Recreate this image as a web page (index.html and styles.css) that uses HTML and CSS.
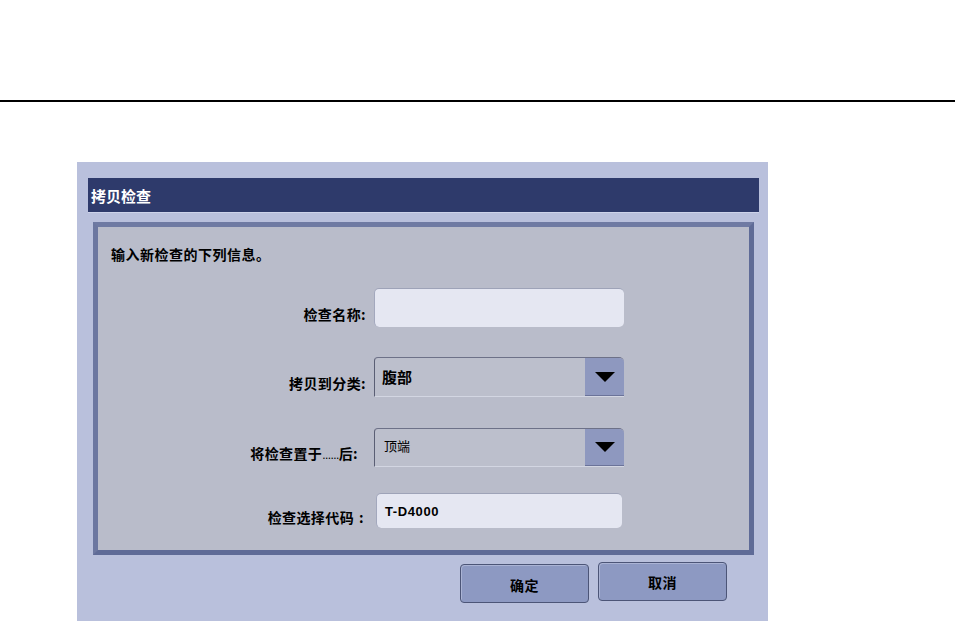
FILE: index.html
```html
<!DOCTYPE html>
<html lang="zh-CN">
<head>
<meta charset="utf-8">
<title>拷贝检查</title>
<link rel="stylesheet" href="styles.css">
</head>
<body>
<div class="top"></div>
<div class="rule"></div>
<div class="stage">
  <div class="dialog">
    <div class="titlebar">拷贝检查</div>
    <div class="panel">
      <div class="intro">输入新检查的下列信息。</div>
      <div class="form">
        <div class="label">检查名称:</div>
        <div class="input input-name"></div>

        <div class="label">拷贝到分类:</div>
        <div class="select select-cat">
          <div class="select-value bold">腹部</div>
          <div class="select-btn"><span class="tri"></span></div>
        </div>

        <div class="label label-after">将检查置于<span class="dots">......</span>后:</div>
        <div class="select select-pos">
          <div class="select-value thin">顶端</div>
          <div class="select-btn"><span class="tri"></span></div>
        </div>

        <div class="label label-code">检查选择代码<span class="colon">:</span></div>
        <div class="input input-code"><span class="code">T-D4000</span></div>
      </div>
    </div>
    <div class="actions">
      <div class="btn btn-ok">确定</div>
      <div class="btn btn-cancel">取消</div>
    </div>
  </div>
</div>
</body>
</html>
```
FILE: styles.css
```css
html, body {
  margin: 0;
  padding: 0;
  background: #ffffff;
  font-family: "Noto Sans CJK SC", "Liberation Sans", sans-serif;
  color: #000;
}

.top {
  height: 100px;
}

.rule {
  height: 2px;
  background: #000;
}

.stage {
  padding: 60px 0 0 77px;
}

.dialog {
  width: 691px;
  height: 459px;
  box-sizing: border-box;
  background: #b9c0dc;
  padding: 16px 9px 0 11px;
  display: flex;
  flex-direction: column;
}

.titlebar {
  height: 34px;
  background: #2e3a6b;
  color: #ffffff;
  font-weight: 700;
  font-size: 15px;
  padding-left: 3px;
  display: flex;
  align-items: center;
  box-shadow: 0 1px 0 #cdd3ea;
}

.panel {
  margin: 10px 0 0 5px;
  width: 661px;
  height: 333px;
  box-sizing: border-box;
  background: #b9bcca;
  border: 5px solid;
  border-color: #6f7aa3 #5f6b97 #5f6b97 #6c77a0;
}

.intro {
  padding: 17px 0 0 13px;
  font-size: 14px;
  font-weight: 700;
  line-height: 20px;
  letter-spacing: 0.5px;
}

.form {
  margin-top: 24px;
  display: grid;
  grid-template-columns: 268px 250px;
  column-gap: 8px;
  row-gap: 30px;
}

.label {
  align-self: center;
  text-align: right;
  font-size: 14px;
  font-weight: 700;
  line-height: 16px;
  padding-top: 12px;
  letter-spacing: 0.4px;
}

.label-after {
  padding-right: 8px;
  margin-top: 1px;
}

.dots {
  font-family: "Liberation Sans", sans-serif;
  font-weight: 400;
  font-size: 12px;
  letter-spacing: -0.6px;
}

.label-code {
  margin-top: -4px;
  padding-right: 2px;
}

.colon {
  margin-left: 5px;
}

.input {
  box-sizing: border-box;
  background: #e5e7f2;
  border-radius: 5px;
  border-top: 1px solid #9ea3b8;
  border-left: 1px solid #a3a8bd;
  display: flex;
  align-items: center;
}

.input-name {
  height: 39px;
}

.input-code {
  height: 35px;
  margin: -4px 2px 0 2px;
  padding-left: 8px;
}

.code {
  font-family: "Liberation Sans", sans-serif;
  font-weight: 700;
  font-size: 13px;
  letter-spacing: 0.6px;
}

.select {
  box-sizing: border-box;
  display: flex;
  background: #bcbfcc;
  border-top: 1px solid #6d7188;
  border-left: 1px solid #5a5e74;
  border-bottom: 1px solid #d3d6e2;
  border-radius: 4px 5px 0 0;
  overflow: hidden;
}

.select-cat {
  height: 40px;
}

.select-pos {
  height: 39px;
  margin-top: 1px;
}

.select-value {
  flex: 1;
  display: flex;
  align-items: center;
  padding-left: 7px;
  font-size: 15px;
}

.select-value.bold {
  font-weight: 700;
  padding-bottom: 2px;
}

.select-value.thin {
  font-weight: 400;
  font-size: 13px;
  color: #000;
  padding-left: 9px;
  padding-bottom: 4px;
}

.select-btn {
  width: 39px;
  background: #8e98bf;
  border-bottom: 1px solid #6b7399;
  display: flex;
  align-items: center;
  justify-content: center;
}

.tri {
  width: 0;
  height: 0;
  border-left: 10px solid transparent;
  border-right: 10px solid transparent;
  border-top: 10px solid #000;
}

.actions {
  display: flex;
  justify-content: flex-end;
  align-items: flex-start;
  gap: 9px;
  margin-top: 7px;
  padding-right: 32px;
}

.btn {
  width: 129px;
  height: 39px;
  box-sizing: border-box;
  background: #8d99c2;
  border: 1px solid #4c5577;
  border-radius: 4px;
  box-shadow: inset 1px 1px 0 #aab3d4;
  display: flex;
  align-items: center;
  justify-content: center;
  font-size: 14px;
  font-weight: 700;
  letter-spacing: 0.5px;
}

.btn-ok {
  margin-top: 2px;
  padding-top: 2px;
}
```
